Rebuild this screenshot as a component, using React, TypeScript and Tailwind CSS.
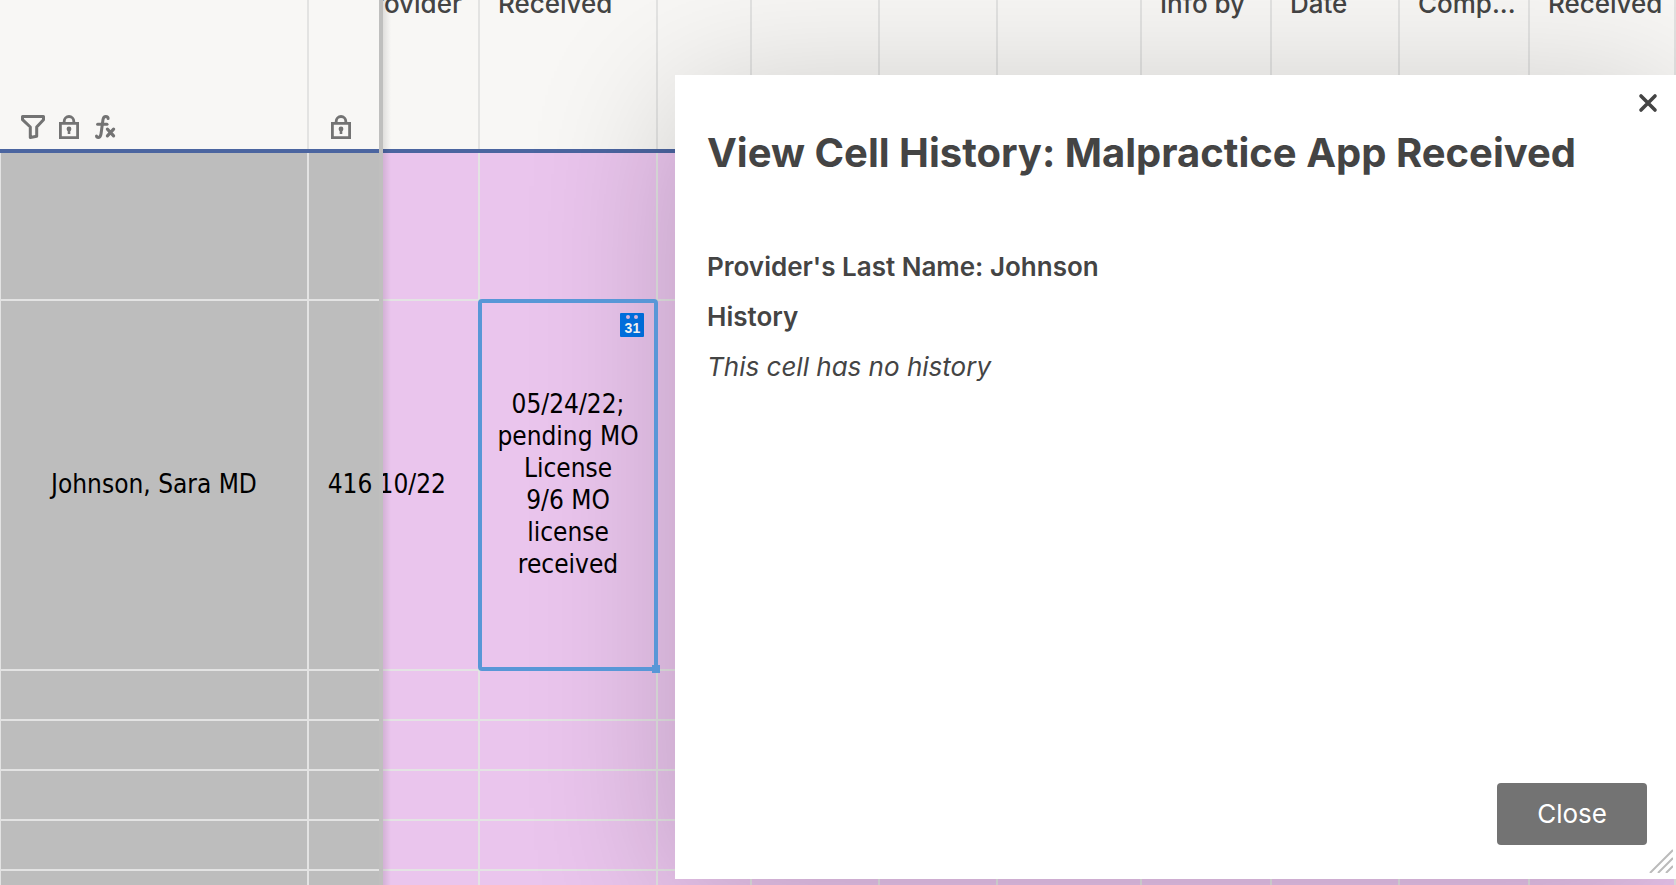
import React from 'react';

interface Column {
  id: string;
  label: string;
  width: string;
}

const columns: Column[] = [
  { id: 'app', label: 'Received', width: 'w-[178px]' },
  { id: 'c1', label: '', width: 'w-[94px]' },
  { id: 'c2', label: '', width: 'w-[128px]' },
  { id: 'c3', label: '', width: 'w-[118px]' },
  { id: 'c4', label: '', width: 'w-[144px]' },
  { id: 'info', label: 'Info by', width: 'w-[130px]' },
  { id: 'date', label: 'Date', width: 'w-[128px]' },
  { id: 'comp', label: 'Comp...', width: 'w-[130px]' },
  { id: 'received', label: 'Received', width: 'w-[146px]' },
];

const rows = [
  { id: 1, height: 'h-[148px]' },
  { id: 2, height: 'h-[370px]', name: 'Johnson, Sara MD', code: '416', date: '10/22' },
  { id: 3, height: 'h-[50px]' },
  { id: 4, height: 'h-[50px]' },
  { id: 5, height: 'h-[50px]' },
  { id: 6, height: 'h-[50px]' },
  { id: 7, height: 'h-[50px]' },
];

const cellNote = '05/24/22; pending MO License\n9/6 MO license received';

function FilterIcon() {
  return (
    <svg className="size-6" viewBox="0 0 24 24" fill="none" stroke="currentColor" strokeWidth="3" strokeLinejoin="round">
      <path d="M1.5 1.5h21v3.2l-6.8 7.3v9.2l-6.4 1.3V12L1.5 4.7z" />
    </svg>
  );
}

function LockIcon() {
  return (
    <svg className="size-6" viewBox="0 0 24 24" fill="none" stroke="currentColor" strokeWidth="2.8">
      <path d="M3.4 8.4h17.2v14.2H3.4z" />
      <path d="M7.2 8V6.3a4.8 4.8 0 0 1 9.6 0V8" />
      <circle cx="12" cy="14" r="2.4" fill="currentColor" stroke="none" />
      <path d="M12 14v5" strokeWidth="2.6" />
    </svg>
  );
}

function FormulaIcon() {
  return (
    <svg className="size-6" viewBox="0 0 24 24" fill="none" stroke="currentColor" strokeWidth="3" strokeLinecap="round">
      <path d="M15.1 3.6c0-1.5-1.2-2.1-2.3-2.1-1.8 0-2.5 1.2-2.8 3L8 19c-.3 2-1 3.4-2.8 3.4-1 0-1.7-.6-1.7-1.4" />
      <path d="M4.6 9.3h9.4" />
      <path d="m14.4 14.2 6.2 6.6m0-6.6-6.2 6.6" strokeWidth="3.2" />
    </svg>
  );
}

function FrozenPane() {
  return (
    <table className="w-[379px] shrink-0 table-fixed border-separate border-spacing-0">
      <thead className="bg-[#f8f7f5] text-[#737373]">
        <tr>
          <th className="w-[309px] border-b-4 border-[#4b65a0] p-0">
            <div className="flex h-[161px] items-end gap-3 border-r-2 border-[#e3e3e2] pb-2.5 pl-[21px]">
              <FilterIcon />
              <LockIcon />
              <FormulaIcon />
            </div>
          </th>
          <th className="border-b-4 border-[#4b65a0] p-0">
            <div className="flex h-[161px] items-end pb-2.5 pl-5">
              <LockIcon />
            </div>
          </th>
        </tr>
      </thead>
      <tbody className="bg-[#bdbdbd] text-center">
        {rows.map((row) => (
          <tr key={row.id}>
            <td className={`${row.height} border-r-2 border-b-2 border-l border-[#e3e3e3] px-0 pt-0 pb-0.5`}>{row.name}</td>
            <td className={`${row.height} border-b-2 border-[#e3e3e3] pt-0 pr-0 pb-0.5 pl-3`}>{row.code}</td>
          </tr>
        ))}
      </tbody>
    </table>
  );
}

function SelectedCell() {
  return (
    <>
      <p className="px-4 whitespace-pre-line">{cellNote}</p>
      <div className="pointer-events-none absolute -inset-0.5 z-10 rounded-sm border-4 border-[#5897d7]">
        <span className="absolute -right-1.5 -bottom-1.5 size-2 bg-[#5897d7]" />
      </div>
      <button aria-label="Pick a date" className="absolute top-3 right-3">
        <svg className="size-6" viewBox="0 0 24 24">
          <rect width="24" height="24" rx="1" fill="#0073e6" />
          <circle cx="8" cy="4" r="2" fill="#e4c0e8" />
          <circle cx="16" cy="4" r="2" fill="#e4c0e8" />
          <text x="12.4" y="20" textAnchor="middle" fontSize="14" fontWeight="700" fill="#fff" fontFamily="Liberation Sans, sans-serif">
            31
          </text>
        </svg>
      </button>
    </>
  );
}

function ScrollPane() {
  return (
    <div className="relative min-w-0 flex-1 overflow-hidden">
      <table className="w-[1293px] table-fixed border-separate border-spacing-0">
        <thead className="bg-[#f8f7f5] font-['Inter',sans-serif] text-[#444]">
          <tr>
            <th className="w-[97px] border-b-4 border-[#4b65a0] p-0 font-medium">
              <div className="flex h-[161px] justify-end overflow-hidden border-r-2 border-[#e3e3e2] pr-4">Provider</div>
            </th>
            {columns.map((col) => (
              <th key={col.id} className={`${col.width} border-b-4 border-[#4b65a0] p-0 text-left font-medium`}>
                <div className="h-[161px] border-r-2 border-[#e3e3e2] pl-4.5 whitespace-nowrap">{col.label}</div>
              </th>
            ))}
          </tr>
        </thead>
        <tbody className="bg-[#eac5ed] text-center">
          {rows.map((row) => (
            <tr key={row.id}>
              <td className={`${row.height} border-r-2 border-b-2 border-[#e3e3e3] px-0 pt-0 pb-0.5`}>
                <div className="flex justify-end pr-8">{row.date}</div>
              </td>
              {columns.map((col) => (
                <td key={col.id} className="relative border-r-2 border-b-2 border-[#e3e3e3] px-0 pt-0 pb-0.5">
                  {row.id === 2 && col.id === 'app' && <SelectedCell />}
                </td>
              ))}
            </tr>
          ))}
        </tbody>
      </table>
      <div className="absolute inset-y-0 left-0 w-2 bg-linear-to-r from-black/10 to-transparent" />
    </div>
  );
}

function HistoryDialog() {
  return (
    <section
      role="dialog"
      aria-labelledby="dialog-title"
      className="absolute top-[75px] right-0 bottom-1.5 left-[675px] flex flex-col bg-white px-8 font-['Inter',sans-serif] text-[#444] shadow-[0_20px_140px_rgba(0,0,0,0.2)]"
    >
      <button aria-label="Close dialog" className="absolute top-4 right-4">
        <svg className="size-6" viewBox="0 0 24 24" fill="none" stroke="currentColor" strokeWidth="3.6" strokeLinecap="round">
          <path d="m5 5 14 14M19 5 5 19" />
        </svg>
      </button>
      <h1 id="dialog-title" className="pt-[54px] text-[40px] leading-12 font-bold">
        View Cell History: Malpractice App Received
      </h1>
      <div className="pt-[65px] text-[26px] leading-[50px]">
        <p className="font-semibold">Provider's Last Name: Johnson</p>
        <h2 className="font-semibold">History</h2>
        <p className="italic">This cell has no history</p>
      </div>
      <div className="mt-auto flex justify-end pb-[34px]">
        <button className="-mr-[3px] rounded bg-[#737373] px-10 py-[15px] text-[26px] leading-8 text-white">Close</button>
      </div>
      <svg className="absolute right-[3px] bottom-1.5 size-6" viewBox="0 0 24 24" stroke="#bbb" strokeWidth="2">
        <path d="M1 24 24 1M9 24 24 9M17 24l7-7" />
      </svg>
    </section>
  );
}

export default function App() {
  return (
    <main className="relative h-screen overflow-hidden bg-[#eac5ed] font-['DejaVu_Sans_Condensed',sans-serif] text-[26px] leading-8 text-black">
      <div className="-mt-3 flex items-stretch">
        <FrozenPane />
        <div className="w-1 shrink-0 bg-[#bfbfbe]" />
        <ScrollPane />
      </div>
      <HistoryDialog />
    </main>
  );
}
